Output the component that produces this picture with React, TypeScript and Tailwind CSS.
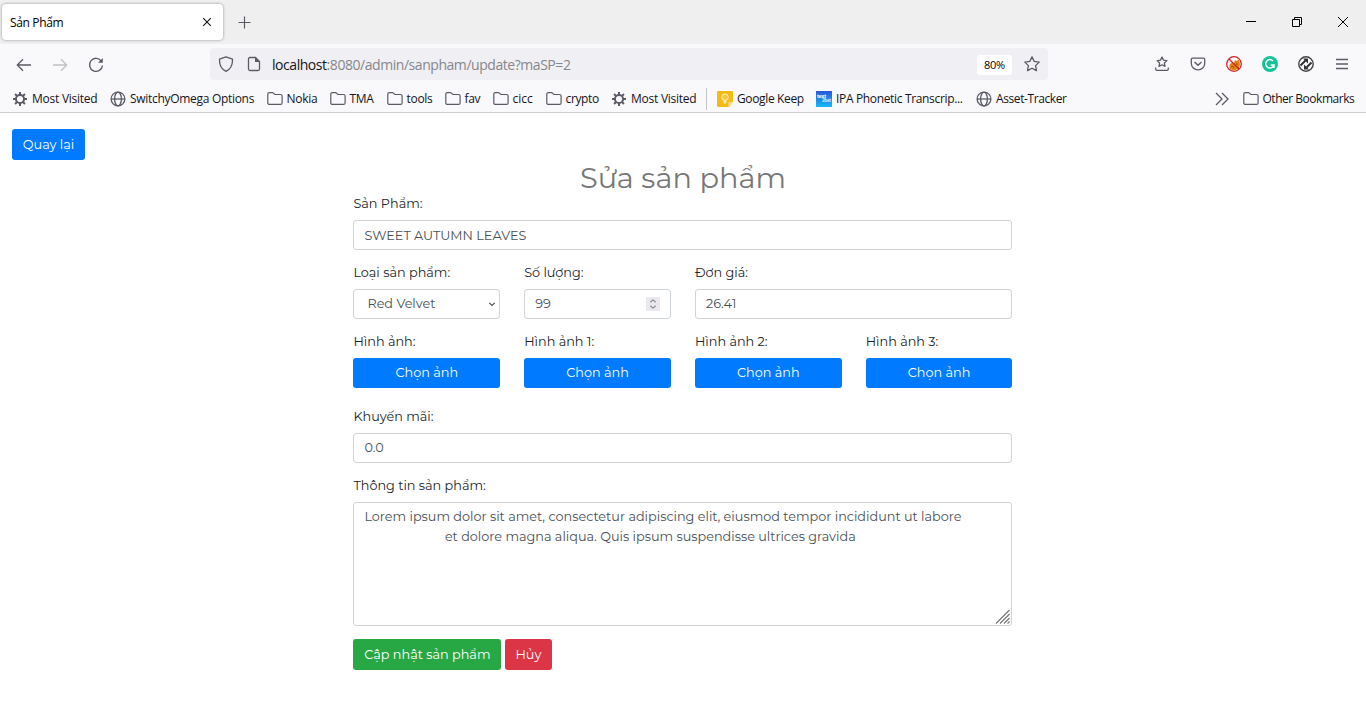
import type { ReactNode } from "react";

const GearIcon = () => (
  <svg width="16" height="16" viewBox="0 0 16 16" fill="none" stroke="#5b5b66">
    <circle cx="8" cy="8" r="4.1" strokeWidth="2" />
    <path d="M8 1v3M8 12v3M1 8h3M12 8h3M3.05 3.05l2.1 2.1M10.85 10.85l2.1 2.1M3.05 12.95l2.1-2.1M10.85 5.15l2.1-2.1" strokeWidth="2" />
  </svg>
);

const GlobeIcon = () => (
  <svg width="16" height="16" viewBox="0 0 16 16" fill="none" stroke="#5b5b66" strokeWidth="1.3">
    <circle cx="8" cy="8" r="6.9" />
    <ellipse cx="8" cy="8" rx="3.4" ry="6.9" />
    <path d="M1 8h14" />
  </svg>
);

const FolderIcon = () => (
  <svg className="-mt-px" width="16" height="16" viewBox="0 0 16 16" fill="none" stroke="#5b5b66" strokeWidth="1.2">
    <path d="M.8 3.2c0-.9.6-1.5 1.5-1.5h3.1c.4 0 .8.2 1.1.5l1.3 1.3h5.6c1 0 1.7.7 1.7 1.6v6.8c0 .9-.7 1.5-1.6 1.5H2.4c-.9 0-1.6-.6-1.6-1.5z" />
  </svg>
);

const KeepIcon = () => (
  <svg width="16" height="16" viewBox="0 0 16 16">
    <path d="M1.2 0h13.6c.7 0 1.2.5 1.2 1.2V11l-4.5 5H1.2C.5 16 0 15.5 0 14.8V1.2C0 .5.5 0 1.2 0z" fill="#f5ba16" />
    <path d="M16 11l-4.5 5v-5z" fill="#fbdc84" />
    <circle cx="8" cy="6.2" r="3.2" fill="#f7c53d" stroke="#fff0c4" strokeWidth="1" />
    <path d="M6.6 9.2h2.8v3.3H6.6z" fill="#fff0c4" />
  </svg>
);

const TextIcon = () => (
  <svg width="16" height="16" viewBox="0 0 16 16">
    <defs>
      <linearGradient id="ipa" x1="0" y1="0" x2="0" y2="1">
        <stop offset="0" stopColor="#2857d8" />
        <stop offset="1" stopColor="#16baf8" />
      </linearGradient>
    </defs>
    <path d="M0 0h16v16H0z" fill="url(#ipa)" />
    <text x="1" y="7" fontSize="5.5" fontWeight="700" fill="#fff" fontFamily="Liberation Sans" textLength="9">text</text>
    <text x="6" y="11" fontSize="5" fontWeight="700" fill="#d8edff" fontFamily="Liberation Sans" textLength="9">2bet</text>
  </svg>
);

type Bookmark = { label: string; icon: ReactNode; width: string; tracking: string };

const bookmarks: Bookmark[] = [
  { label: "Most Visited", icon: <GearIcon />, width: "w-[98px]", tracking: "tracking-[-0.25px]" },
  { label: "SwitchyOmega Options", icon: <GlobeIcon />, width: "w-[156.5px]", tracking: "tracking-[-0.3px]" },
  { label: "Nokia", icon: <FolderIcon />, width: "w-[63px]", tracking: "tracking-[-0.3px]" },
  { label: "TMA", icon: <FolderIcon />, width: "w-[57px]", tracking: "tracking-[-0.3px]" },
  { label: "tools", icon: <FolderIcon />, width: "w-[58px]", tracking: "tracking-[-0.3px]" },
  { label: "fav", icon: <FolderIcon />, width: "w-[48px]", tracking: "tracking-[-0.3px]" },
  { label: "cicc", icon: <FolderIcon />, width: "w-[53px]", tracking: "tracking-normal" },
  { label: "crypto", icon: <FolderIcon />, width: "w-[65.5px]", tracking: "tracking-[-0.35px]" },
  { label: "Most Visited", icon: <GearIcon />, width: "w-[95px]", tracking: "tracking-[-0.25px]" },
];

const sites: Bookmark[] = [
  { label: "Google Keep", icon: <KeepIcon />, width: "w-[99px]", tracking: "tracking-[-0.36px]" },
  { label: "IPA Phonetic Transcrip...", icon: <TextIcon />, width: "w-[160px]", tracking: "tracking-[-0.34px]" },
  { label: "Asset-Tracker", icon: <GlobeIcon />, width: "w-[92px]", tracking: "tracking-[-0.4px]" },
];

function BookmarkItem({ label, icon, width, tracking }: Bookmark) {
  return (
    <div className={`flex h-5 shrink-0 items-center ${width}`}>
      <span className="w-[20px] shrink-0">{icon}</span>
      <span className={`whitespace-nowrap ${tracking}`}>{label}</span>
    </div>
  );
}

function TabStrip() {
  return (
    <div className="flex h-11 bg-[#efefef]">
      <div className="ml-0.5 mt-1 flex h-[36px] w-[221px] items-center justify-between rounded bg-white pl-2 pr-[11px] text-[12px] shadow-[0_0_3px_rgba(0,0,0,0.4)]">
        <span className="pt-0.5 tracking-[-0.35px]">Sản Phẩm</span>
        <svg width="10" height="10" viewBox="0 0 10 10" stroke="#15141a" strokeWidth="1.1"><path d="M1.2 1.2l7.6 7.6M8.8 1.2L1.2 8.8" /></svg>
      </div>
      <svg className="ml-[15px] mt-[16px]" width="13" height="13" viewBox="0 0 13 13" stroke="#5b5b66" strokeWidth="1.2"><path d="M6.5.5v12M.5 6.5h12" /></svg>
      <div className="ml-auto mr-[17px] mt-[16px] flex gap-[34px]">
        <svg width="12" height="12" viewBox="0 0 12 12" stroke="#000" shapeRendering="crispEdges"><path d="M1 5.5h10" /></svg>
        <svg width="12" height="12" viewBox="0 0 12 12" fill="none" stroke="#000"><path d="M1.5 3.5h7v7h-7zM3.5 3.5v-2h7v7h-2" /></svg>
        <svg width="12" height="12" viewBox="0 0 12 12" stroke="#000"><path d="M1 1l10 10M11 1L1 11" /></svg>
      </div>
    </div>
  );
}

function NavBar() {
  return (
    <div className="flex h-[42px] items-center bg-[#f9f9fb] pl-4 pr-4">
      <div className="flex w-[194px] gap-5">
        <svg width="16" height="16" viewBox="0 0 16 16" fill="none" stroke="#5b5b66" strokeWidth="1.3"><path d="M15 8H1.5M7 2.3L1.3 8 7 13.7" /></svg>
        <svg width="16" height="16" viewBox="0 0 16 16" fill="none" stroke="#bfbfc5" strokeWidth="1.3"><path d="M1 8h13.5M9 2.3L14.7 8 9 13.7" /></svg>
        <svg width="16" height="16" viewBox="0 0 16 16" fill="none" stroke="#5b5b66" strokeWidth="1.4"><path d="M13.5 4.3A6.5 6.5 0 1 0 14.5 8.5" /><path d="M14.8 1v4.8H10z" fill="#5b5b66" stroke="none" /></svg>
      </div>
      <div className="-mt-0.5 flex h-8 w-[838px] items-center rounded bg-[#f0f0f4] px-2">
        <svg width="16" height="16" viewBox="0 0 16 16" fill="none" stroke="#5b5b66" strokeWidth="1.3"><path d="M8 .8L14.5 3.2C14.7 8.8 12.8 13 8 15.3 3.2 13 1.3 8.8 1.5 3.2z" strokeLinejoin="round" /></svg>
        <svg className="ml-3" width="16" height="16" viewBox="0 0 16 16" fill="none" stroke="#5b5b66" strokeWidth="1.3"><path d="M9.5 1.5H4Q2.5 1.5 2.5 3v10q0 1.5 1.5 1.5h8q1.5 0 1.5-1.5V5.5z" /><path d="M9 1v5h5z" fill="#5b5b66" stroke="none" /></svg>
        <span className="ml-[10px] whitespace-nowrap pt-px text-[14px] tracking-[-0.45px] text-[#86868c]"><span className="text-[#15141a]">localhost</span>:8080/admin/sanpham/update?maSP=2</span>
        <span className="ml-auto mt-px flex h-5 w-[35px] items-center justify-center rounded-[3px] bg-white pt-px text-[11px] tracking-[-0.3px]">80%</span>
        <svg className="ml-3" width="16" height="16" viewBox="0 0 16 16" fill="none" stroke="#5b5b66" strokeWidth="1.3"><path d="M8 .9l2.2 4.5 5 .7-3.6 3.5.9 5L8 12.2l-4.5 2.4.9-5L.8 6.1l5-.7z" strokeLinejoin="round" /></svg>
      </div>
      <div className="-mt-0.5 ml-auto flex gap-5">
        <svg width="16" height="16" viewBox="0 0 16 16" fill="none" stroke="#5b5b66" strokeWidth="1.3"><path d="M8 1l1.5 3.1 3.4.5-2.5 2.4.6 3.4L8 8.8l-3 1.6.6-3.4-2.5-2.4 3.4-.5zM1.7 11.5V13q0 1.3 1.3 1.3h10q1.3 0 1.3-1.3v-1.5" strokeLinejoin="round" /></svg>
        <svg width="16" height="16" viewBox="0 0 16 16" fill="none" stroke="#5b5b66" strokeWidth="1.3"><path d="M2.8 2.2h10.4q1.5 0 1.5 1.5v3.5a6.7 6.7 0 0 1-13.4 0V3.7q0-1.5 1.5-1.5zM4.5 6L8 9.3 11.5 6" /></svg>
        <svg width="16" height="16" viewBox="0 0 16 16" fill="none"><path d="M3.5 8.5L6 6.5l2 .5 1-3 1.5 1L13 3.5l1 5-1.5 4.5-5 1.5-4-1.5z" fill="#e5820f" /><path d="M5 11l2-1 1 2M10.5 7l.5 2" stroke="#8a5313" /><circle cx="8" cy="8" r="7.3" stroke="#cf2029" strokeWidth="1.3" /><path d="M3 3l10 10" stroke="#cf2029" strokeWidth="1.3" /></svg>
        <svg width="16" height="16" viewBox="0 0 16 16" fill="none"><circle cx="8" cy="8" r="8" fill="#15c39a" /><path d="M11 4.9A4.2 4.2 0 1 0 12 9H8.7M12 8.5V12" stroke="#fff" strokeWidth="1.5" /></svg>
        <svg width="16" height="16" viewBox="0 0 16 16" fill="none"><circle cx="8" cy="8" r="7.2" stroke="#444" strokeWidth="1.4" /><path d="M2.5 9.5L7.5 4.5M8.5 11.5l5-5" stroke="#333" strokeWidth="2" /><path d="M5 2.5h5v5zM6 8.5v5h5z" fill="#333" /></svg>
        <svg width="16" height="16" viewBox="0 0 16 16" stroke="#5b5b66" strokeWidth="1.3"><path d="M2 3.5h12M2 8h12M2 12.5h12" /></svg>
      </div>
    </div>
  );
}

function BookmarksBar() {
  return (
    <div className="flex h-[27px] items-center border-b border-[#cccccc] bg-[#f9f9fb] pl-3 text-[12px] text-[#15141a]">
      {bookmarks.map((item, i) => <BookmarkItem key={i} {...item} />)}
      <span className="mr-[10px] h-[22px] w-px bg-[#c4c4c8]" />
      {sites.map((item) => <BookmarkItem key={item.label} {...item} />)}
      <svg className="ml-auto mr-[14px] shrink-0" width="14" height="14" viewBox="0 0 14 14" fill="none" stroke="#5b5b66" strokeWidth="1.3"><path d="M1 1l6 6-6 6M7 1l6 6-6 6" /></svg>
      <BookmarkItem label="Other Bookmarks" icon={<FolderIcon />} width="w-[123.5px]" tracking="tracking-[-0.48px]" />
    </div>
  );
}

function Field({ label, className = "", children }: { label: string; className?: string; children: ReactNode }) {
  return (
    <div className={`flex flex-col ${className}`}>
      <label className="mb-[6px] h-[21px] whitespace-nowrap pt-px leading-5 text-[#212529]">{label}</label>
      {children}
    </div>
  );
}

const control = "flex h-[30px] items-center rounded-[3px] border border-[#ced4da] bg-white text-[#495057]";
const photos = ["Hình ảnh:", "Hình ảnh 1:", "Hình ảnh 2:", "Hình ảnh 3:"];

function ProductForm() {
  return (
    <main className="font-[Montserrat,Inter,sans-serif] text-[12.8px]">
      <button className="ml-3 mt-4 block h-[31px] w-[73px] rounded-[3px] bg-[#007bff] text-white">Quay lại</button>
      <h1 className="h-[33px] text-center text-[28.8px] font-normal leading-[36px] text-[#777]">Sửa sản phẩm</h1>
      <form className="ml-[353.4px] w-[659px]">
        <Field label="Sản Phẩm:"><div className={`${control} px-[10px] pt-0.5`}>SWEET AUTUMN LEAVES</div></Field>
        <div className="mt-3 grid grid-cols-4 gap-x-6">
          <Field label="Loại sản phẩm:">
            <div className={`${control} justify-between pl-[13px] pr-[3px]`}>
              Red Velvet
              <svg width="8" height="8" viewBox="0 0 8 8" fill="none" stroke="#495057" strokeWidth="1.2"><path d="M1.3 2.8L4 5.5l2.7-2.7" /></svg>
            </div>
          </Field>
          <Field label="Số lượng:">
            <div className={`${control} justify-between px-[10px]`}>
              99
              <span className="flex h-[14px] w-[14px] items-center justify-center bg-[#e9e9ed]">
                <svg width="8" height="12" viewBox="0 0 8 12" fill="none" stroke="#8f8f9d" strokeWidth="1.3"><path d="M1.3 4.2L4 1.8l2.7 2.4M1.3 7.8L4 10.2l2.7-2.4" /></svg>
              </span>
            </div>
          </Field>
          <Field label="Đơn giá:" className="col-span-2"><div className={`${control} px-[10px]`}>26.41</div></Field>
        </div>
        <div className="mt-3 grid grid-cols-4 gap-x-6">
          {photos.map((label) => (
            <Field key={label} label={label}>
              <button type="button" className="h-[30px] rounded-[3px] bg-[#007bff] text-white">Chọn ảnh</button>
            </Field>
          ))}
        </div>
        <Field label="Khuyến mãi:" className="mt-[18px]"><div className={`${control} px-[10px]`}>0.0</div></Field>
        <Field label="Thông tin sản phẩm:" className="mt-3">
          <div className="relative h-[124px] rounded-[3px] border border-[#ced4da] px-[10px] pt-1 leading-5 text-[#495057]">
            <p className="whitespace-nowrap">Lorem ipsum dolor sit amet, consectetur adipiscing elit, eiusmod tempor incididunt ut labore</p>
            <p className="whitespace-nowrap pl-[80.5px]">et dolore magna aliqua. Quis ipsum suspendisse ultrices gravida</p>
            <svg className="absolute bottom-px right-px" width="15" height="15" viewBox="0 0 15 15" stroke="#777" strokeWidth="1.2"><path d="M1 14.5L14.5 1M5 14.5L14.5 5M9 14.5L14.5 9M12.5 14.5l2-2" /></svg>
          </div>
        </Field>
        <div className="mt-[13px] flex gap-1 text-white">
          <button type="button" className="h-[31px] w-[148px] whitespace-nowrap rounded-[3px] bg-[#28a745]">Cập nhật sản phẩm</button>
          <button type="button" className="h-[31px] w-[47px] rounded-[3px] bg-[#dc3545] pr-px">Hủy</button>
        </div>
      </form>
    </main>
  );
}

export default function App() {
  return (
    <div className="flex h-[721px] w-[1366px] flex-col overflow-hidden bg-white font-[Open_Sans,sans-serif] text-black">
      <TabStrip />
      <NavBar />
      <BookmarksBar />
      <ProductForm />
    </div>
  );
}
